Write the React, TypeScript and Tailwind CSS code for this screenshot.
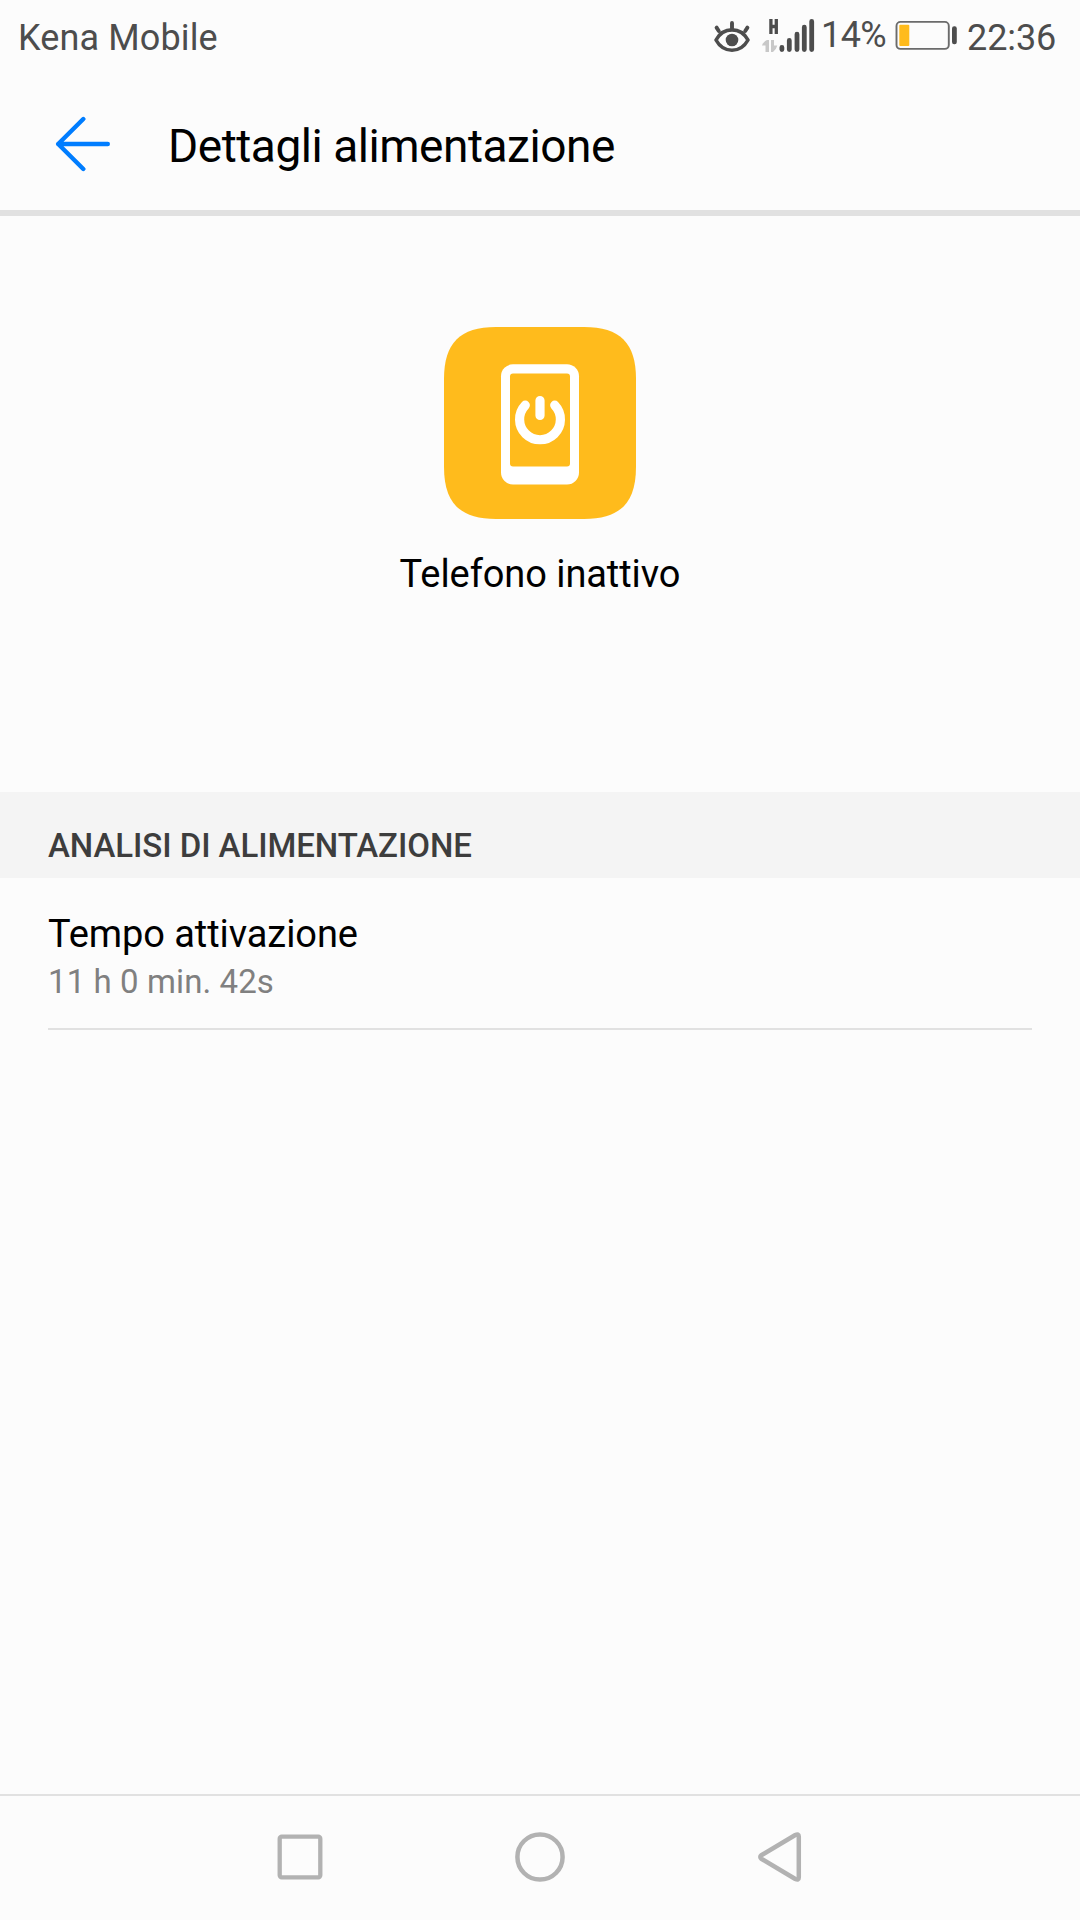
function EyeIcon() {
  return (
    <svg className="h-[34px] w-[40px] shrink-0" viewBox="0 0 40 34" fill="none" stroke="#4d4d4d" strokeLinecap="round">
      <path d="M4 20C7 14.5 12.5 9.900 20 9.900S33 14.5 36 20C33 25.500 27.500 30.200 20 30.200S7 25.500 4 20Z" strokeWidth="3.600" strokeLinejoin="round" />
      <path d="M20 8.500V3M6.800 11 4.600 7.600M33.200 11 35.400 7.600" strokeWidth="3.900" />
      <circle cx="20" cy="20" r="6.300" fill="#4d4d4d" stroke="none" />
    </svg>
  );
}

function SignalIcon() {
  return (
    <svg className="h-[36px] w-[54px] shrink-0" viewBox="762 18 54 36" fill="none">
      <path d="M770.900 19V34M776.300 19V34M770.900 26.500H776.300" stroke="#4d4d4d" strokeWidth="3.300" />
      <path d="M769 40V52H765.500V45.500H762Q763 42 767 40ZM771 40H774V45.500H777.300Q776.500 49 773 52H771Z" fill="#c8c8c8" />
      <g stroke="#4d4d4d" strokeWidth="4.800" strokeLinecap="round">
        <path d="M781.900 47.500V49.500M789.300 40.500V49.500M797 34.200V49.500M804.300 27.200V49.500M811.700 21.400V49.500" />
      </g>
    </svg>
  );
}

function BatteryIcon() {
  return (
    <svg className="h-[30px] w-[62px] shrink-0" viewBox="895 20 62 30" fill="none">
      <rect x="896.500" y="21.900" width="52.300" height="27" rx="4" stroke="#6b6b6b" strokeWidth="1.900" />
      <rect x="899.300" y="24.800" width="10" height="21.300" rx="1" fill="#ffbb1c" />
      <rect x="952" y="26.300" width="4.800" height="18" rx="2.200" fill="#4d4d4d" />
    </svg>
  );
}

function StatusBar() {
  return (
    <div className="flex h-[72px] items-start pt-[17px] text-[36px] leading-[42px] text-[#4d4d4d]">
      <span className="ml-[18px] tracking-[0.13px]">Kena Mobile</span>
      <div className="ml-auto mr-[24px] flex items-start">
        <div className="mt-[3px] mr-[10px]"><EyeIcon /></div>
        <div className="mt-px mr-[5px]"><SignalIcon /></div>
        <span className="mt-[-3px] mr-[10px] w-[64px] whitespace-nowrap tracking-[-0.6px]">14%</span>
        <div className="mt-[3px] mr-[10px]"><BatteryIcon /></div>
        <span className="w-[89px] whitespace-nowrap tracking-[-0.1px]">22:36</span>
      </div>
    </div>
  );
}

function Header() {
  return (
    <header className="flex h-[144px] items-start border-b-[6px] border-[#e1e1e1]">
      <svg className="mt-[44px] ml-[55px] h-[56px] w-[56px] shrink-0" viewBox="55 116 56 56" fill="none" stroke="#007dff" strokeWidth="4.400" strokeLinecap="round" strokeLinejoin="round">
        <path d="M83.300 119 58.200 144 83.300 169M58.200 144H107.800" />
      </svg>
      <h1 className="mt-[46px] ml-[57px] text-[46px] leading-[56px] tracking-[-0.46px] text-black">Dettagli alimentazione</h1>
    </header>
  );
}

function AppIcon() {
  return (
    <svg className="size-[192px]" viewBox="0 0 192 192" fill="none">
      <path d="M0 52C0 16 16 0 52 0H140C176 0 192 16 192 52V140C192 176 176 192 140 192H52C16 192 0 176 0 140Z" fill="#ffbb1c" />
      <rect x="57" y="37.300" width="78" height="120.300" rx="12" fill="#fff" />
      <rect x="66" y="46.500" width="60" height="93" rx="3" fill="#ffbb1c" />
      <path d="M81.300 78.200A20.400 20.400 0 1 0 110.700 78.200M96 73.500V88.500" stroke="#fff" strokeWidth="9.200" strokeLinecap="round" />
    </svg>
  );
}

function NavBar() {
  return (
    <nav className="flex h-[126px] items-start justify-center gap-[136px] border-t-2 border-[#e1e1e1] pt-[31px]">
      <svg className="size-[60px]" viewBox="270 1827 60 60" fill="none" stroke="#b2b2b2" strokeWidth="4.300">
        <rect x="279.700" y="1836.700" width="40.600" height="40.600" rx="2" />
      </svg>
      <svg className="mx-[44px] size-[60px]" viewBox="510 1827 60 60" fill="none" stroke="#b2b2b2" strokeWidth="4.500">
        <circle cx="540" cy="1857" r="22.600" />
      </svg>
      <svg className="size-[60px]" viewBox="750 1827 60 60" fill="none" stroke="#b2b2b2" strokeWidth="4.500" strokeLinejoin="round">
        <path d="M761.300 1855.300Q759.300 1857 761.300 1858.700L795.300 1879Q798.800 1880.700 798.800 1877.500V1836.500Q798.800 1833.300 795.300 1835Z" />
      </svg>
    </nav>
  );
}

export default function App() {
  return (
    <div className="flex h-[1920px] w-[1080px] flex-col bg-[#fcfcfc] font-['Roboto',sans-serif]">
      <StatusBar />
      <Header />
      <main className="flex flex-1 flex-col">
        <section className="flex h-[576px] flex-col items-center pt-[111px]">
          <AppIcon />
          <p className="mt-[33px] text-[38px] leading-[44px] tracking-[-0.08px] text-black">Telefono inattivo</p>
        </section>
        <h2 className="h-[86px] bg-[#f4f4f4] pt-[34px] pl-[48px] text-[33px] leading-[40px] font-medium tracking-[-0.06px] text-[#3d3d3d]">
          ANALISI DI ALIMENTAZIONE
        </h2>
        <section className="mx-[48px] h-[152px] border-b-2 border-[#e1e1e1] pt-[34px]">
          <p className="text-[38px] leading-[44px] tracking-[-0.08px] text-black">Tempo attivazione</p>
          <p className="mt-[6px] text-[33px] leading-[40px] tracking-[0.09px] text-[#808080]">11 h 0 min. 42s</p>
        </section>
      </main>
      <NavBar />
    </div>
  );
}
